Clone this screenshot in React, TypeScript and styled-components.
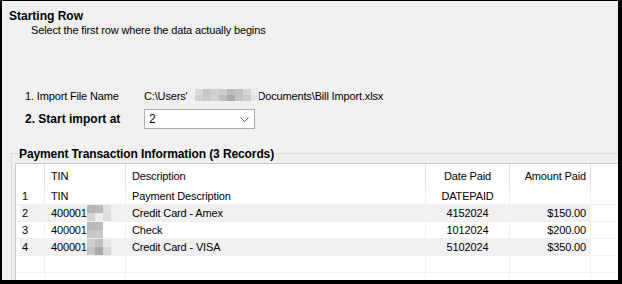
import React, { FC } from 'react';
import styled, { createGlobalStyle } from 'styled-components';

type Row = {
  no: string;
  tin: string;
  blur?: string[][];
  description: string;
  datePaid: string;
  amount: string;
};

const rows: Row[] = [
  { no: '1', tin: 'TIN', description: 'Payment Description', datePaid: 'DATEPAID', amount: '' },
  {
    no: '2',
    tin: '400001',
    blur: [
      ['#b4b4b4', '#b9b9b9', '#e2e2e2'],
      ['#d3d3d3', '#ececec', '#dcdcdc'],
    ],
    description: 'Credit Card - Amex',
    datePaid: '4152024',
    amount: '$150.00',
  },
  {
    no: '3',
    tin: '400001',
    blur: [
      ['#b8b8b8', '#bcbcbc', '#ffffff'],
      ['#c6c6c6', '#cbcbcb', '#ffffff'],
    ],
    description: 'Check',
    datePaid: '1012024',
    amount: '$200.00',
  },
  {
    no: '4',
    tin: '400001',
    blur: [
      ['#d0d0d0', '#c2c2c2', '#e6e6e6'],
      ['#c4c4c4', '#a9a9a9', '#d6d6d6'],
    ],
    description: 'Credit Card - VISA',
    datePaid: '5102024',
    amount: '$350.00',
  },
  { no: '', tin: '', description: '', datePaid: '', amount: '' },
  { no: '', tin: '', description: '', datePaid: '', amount: '' },
];

const pathBlur = [
  ['#d9d9d9', '#c6c6c6', '#d0d0d0', '#cbcbcb', '#bababa', '#c1c1c1', '#d6d6d6', '#ebebeb'],
  ['#d1d1d1', '#c9c9c9', '#d3d3d3', '#bebebe', '#a9a9a9', '#c3c3c3', '#cdcdcd', '#e5e5e5'],
];

type BlurProps = { cells: string[][]; cellW: number; cellH: number; offset?: number };

const Blur: FC<BlurProps> = ({ cells, cellW, cellH, offset = 0 }) => (
  <BlurBox $cols={cells[0].length} $w={cellW} $h={cellH} $offset={offset}>
    {cells.flat().map((c, i) => (
      <BlurCell key={i} $c={c} />
    ))}
  </BlurBox>
);

export default function App() {
  return (
    <>
      <GlobalStyle />
      <Frame>
        <Top>
          <Title>Starting Row</Title>
          <Subtitle>Select the first row where the data actually begins</Subtitle>
          <Form>
            <FieldRow>
              <Label>1. Import File Name</Label>
              <PathText>
                C:\Users'
                <Blur cells={pathBlur} cellW={8} cellH={6} offset={7} />
                \Documents\Bill Import.xlsx
              </PathText>
            </FieldRow>
            <FieldRow $tall>
              <Label $bold>2. Start import at</Label>
              <Combo>
                <span>2</span>
                <svg width='9' height='5' viewBox='0 0 9 5'>
                  <polyline points='0.5,0.5 4.5,4.5 8.5,0.5' fill='none' stroke='#5f5f5f' strokeWidth='1' />
                </svg>
              </Combo>
            </FieldRow>
          </Form>
        </Top>
        <Group>
          <Legend>Payment Transaction Information (3 Records)</Legend>
          <Grid>
            <HeadCell />
            <HeadCell>TIN</HeadCell>
            <HeadCell>Description</HeadCell>
            <HeadCell $align='center'>Date Paid</HeadCell>
            <HeadCell $align='right'>Amount Paid</HeadCell>
            <HeadCell $last />
            {rows.map((r, i) => {
              const alt = i % 2 === 1 && r.no !== '';
              return (
                <React.Fragment key={i}>
                  <RowHeadCell $alt={alt}>{r.no}</RowHeadCell>
                  <Cell $alt={alt}>
                    {r.tin}
                    {r.blur && <Blur cells={r.blur} cellW={8} cellH={8} />}
                  </Cell>
                  <Cell $alt={alt}>{r.description}</Cell>
                  <Cell $alt={alt} $align='center'>{r.datePaid}</Cell>
                  <Cell $alt={alt} $align='right'>{r.amount}</Cell>
                  <Cell />
                </React.Fragment>
              );
            })}
          </Grid>
        </Group>
      </Frame>
    </>
  );
}

const GlobalStyle = createGlobalStyle`
  body {
    margin: 0;
    font-family: 'Liberation Sans', Arial, sans-serif;
  }
`;

const Frame = styled.div`
  width: 622px;
  height: 284px;
  box-sizing: border-box;
  border-style: solid;
  border-color: #000000;
  border-width: 1px 4px 4px 2px;
  background: #f0f0f0;
  overflow: hidden;
  display: flex;
  flex-direction: column;
  color: #000000;
`;

const Top = styled.div`
  padding: 8px 0 0 7px;
  display: flex;
  flex-direction: column;
`;

const Title = styled.div`
  font-size: 12px;
  font-weight: bold;
  line-height: 14px;
`;

const Subtitle = styled.div`
  margin: 1px 0 0 22px;
  font-size: 11px;
  line-height: 13px;
  letter-spacing: -0.15px;
`;

const Form = styled.div`
  margin: 51px 0 0 16px;
  display: flex;
  flex-direction: column;
  gap: 5px;
`;

const FieldRow = styled.div<{ $tall?: boolean }>`
  display: grid;
  grid-template-columns: 119px 1fr;
  align-items: center;
  height: ${(p) => (p.$tall ? '20px' : '16px')};
`;

const Label = styled.div<{ $bold?: boolean }>`
  font-size: ${(p) => (p.$bold ? '12px' : '11px')};
  font-weight: ${(p) => (p.$bold ? 'bold' : 'normal')};
  letter-spacing: ${(p) => (p.$bold ? '0' : '-0.15px')};
  line-height: 16px;
`;

const PathText = styled.div`
  display: flex;
  align-items: center;
  font-size: 11px;
  line-height: 16px;
  letter-spacing: -0.15px;
  white-space: pre;
`;

const BlurBox = styled.span<{ $cols: number; $w: number; $h: number; $offset: number }>`
  display: inline-grid;
  grid-template-columns: repeat(${(p) => p.$cols}, ${(p) => p.$w}px);
  grid-auto-rows: ${(p) => p.$h}px;
  margin-left: ${(p) => p.$offset}px;
  margin-right: ${(p) => (p.$offset ? -4 : 0)}px;
  margin-top: ${(p) => (p.$offset ? -2 : 0)}px;
  position: relative;
  vertical-align: middle;
`;

const BlurCell = styled.span<{ $c: string }>`
  background: ${(p) => p.$c};
`;

const Combo = styled.div`
  width: 111px;
  height: 20px;
  box-sizing: border-box;
  border: 1px solid #acacac;
  background: #ffffff;
  display: flex;
  align-items: center;
  justify-content: space-between;
  padding: 0 5px 0 4px;
  font-size: 12px;

  svg {
    margin-top: 1px;
  }
`;

const Group = styled.fieldset`
  margin: 16px -40px 0 9px;
  padding: 2px 0 0 3px;
  border: 1px solid #dcdcdc;
  min-width: 0;
`;

const Legend = styled.legend`
  margin-left: 3px;
  padding: 2px 1px 0;
  font-size: 12px;
  font-weight: bold;
  line-height: 14px;
  letter-spacing: -0.1px;
`;

const Grid = styled.div`
  display: grid;
  grid-template-columns: 29px 81px 300px 84px 81px 1fr;
  grid-template-rows: 24px;
  grid-auto-rows: 17px;
  background: #ffffff;
  border: 1px solid #c9c9c9;
  border-right: none;
  font-size: 11px;
  letter-spacing: -0.15px;
`;

const HeadCell = styled.div<{ $align?: 'left' | 'center' | 'right'; $last?: boolean }>`
  display: flex;
  align-items: center;
  justify-content: ${(p) =>
    p.$align === 'center' ? 'center' : p.$align === 'right' ? 'flex-end' : 'flex-start'};
  padding: 0 ${(p) => (p.$align === 'right' ? '4px' : '0')} 0 ${(p) => (p.$align ? '0' : '6px')};
  border-right: ${(p) => (p.$last ? 'none' : '1px solid #e3e3e3')};
  background: #ffffff;
`;

const Cell = styled.div<{ $alt?: boolean; $align?: 'left' | 'center' | 'right' }>`
  display: flex;
  align-items: center;
  justify-content: ${(p) =>
    p.$align === 'center' ? 'center' : p.$align === 'right' ? 'flex-end' : 'flex-start'};
  padding: 0 ${(p) => (p.$align === 'right' ? '4px' : '0')} 0 ${(p) => (p.$align ? '0' : '6px')};
  background: ${(p) => (p.$alt ? '#f0f0f0' : '#ffffff')};
  border-right: 1px solid #f0f0f0;
  border-bottom: 1px solid #f0f0f0;
  white-space: nowrap;
  overflow: hidden;
`;

const RowHeadCell = styled.div<{ $alt?: boolean }>`
  display: flex;
  align-items: center;
  padding-left: 4px;
  text-indent: 2px;
  background: ${(p) => (p.$alt ? '#f0f0f0' : '#ffffff')};
  background-clip: content-box;
  border-right: 1px solid #f0f0f0;
  border-bottom: 1px solid #f0f0f0;
`;
